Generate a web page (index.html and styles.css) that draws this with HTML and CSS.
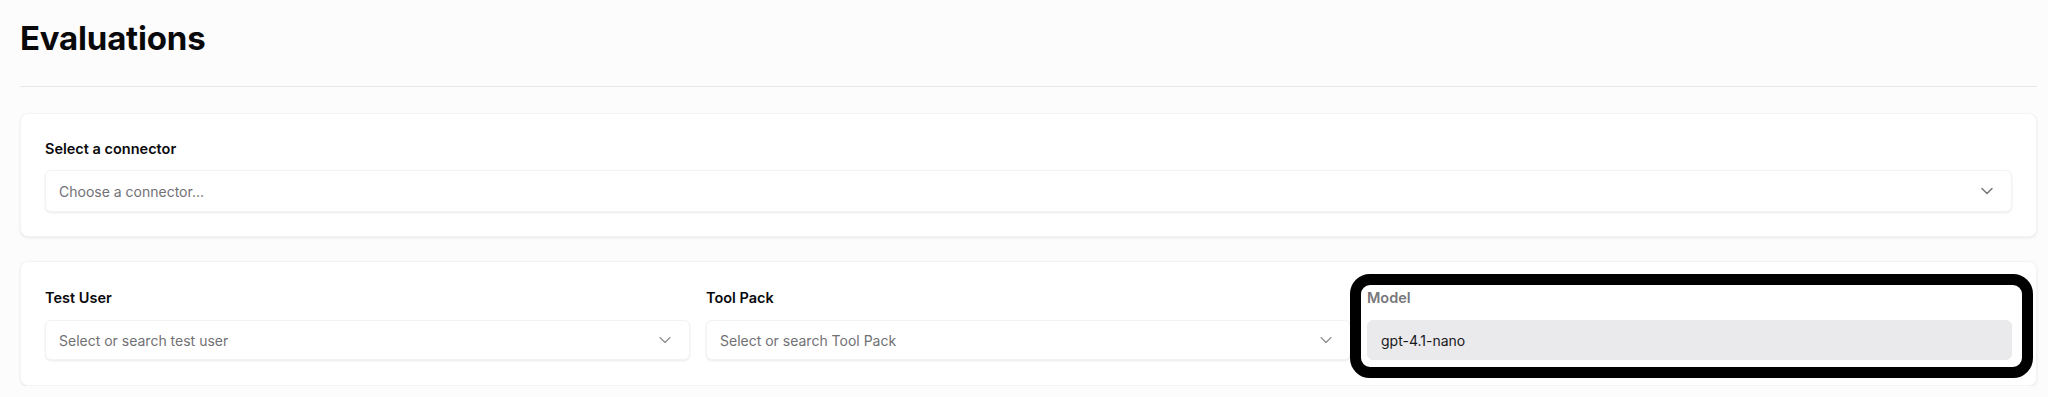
FILE: index.html
```html
<!DOCTYPE html>
<html lang="en">
<head>
<meta charset="utf-8">
<title>Evaluations</title>
<link rel="stylesheet" href="styles.css">
</head>
<body>
<main class="page">
  <h1 class="title">Evaluations</h1>
  <div class="divider"></div>

  <section class="card card-connector">
    <label class="label">Select a connector</label>
    <div class="select select-tall">
      <span class="placeholder">Choose a connector...</span>
      <svg class="chevron" viewBox="0 0 24 24" width="20" height="20"><path d="m6 9 6 6 6-6"/></svg>
    </div>
  </section>

  <section class="card card-grid">
    <div class="field">
      <label class="label">Test User</label>
      <div class="select">
        <span class="placeholder">Select or search test user</span>
        <svg class="chevron thin" viewBox="0 0 24 24" width="20" height="20"><path d="m6 9 6 6 6-6"/></svg>
      </div>
    </div>
    <div class="field">
      <label class="label">Tool Pack</label>
      <div class="select">
        <span class="placeholder">Select or search Tool Pack</span>
        <svg class="chevron thin" viewBox="0 0 24 24" width="20" height="20"><path d="m6 9 6 6 6-6"/></svg>
      </div>
    </div>
    <div class="field field-model">
      <label class="label label-disabled">Model</label>
      <div class="select select-disabled">
        <span class="value">gpt-4.1-nano</span>
      </div>
    </div>
  </section>
</main>
</body>
</html>
```
FILE: styles.css
```css
* { box-sizing: border-box; }
html, body { margin: 0; padding: 0; }
body {
  background: #fdfcfd;
  font-family: Inter, "Noto Sans", "Liberation Sans", sans-serif;
  color: #09090b;
}
.page {
  padding: 18px 11px 0 20px;
}
.title {
  margin: 0;
  font-size: 33px;
  line-height: 40px;
  font-weight: 700;
  letter-spacing: -0.2px;
}
.divider {
  margin-top: 28px;
  height: 1px;
  background: #e8e7ea;
}
.card {
  background: #ffffff;
  border: 1px solid #f4f3f6;
  border-radius: 8px;
  box-shadow: 0 1px 3px rgba(20, 10, 40, 0.06), 0 1px 2px rgba(20, 10, 40, 0.03);
}
.card-connector {
  margin-top: 26px;
  padding: 25px 24px 24px 24px;
}
.card-grid {
  margin-top: 24px;
  padding: 26px 24px 25px 24px;
  display: grid;
  grid-template-columns: 1fr 1fr 1fr;
  column-gap: 16px;
}
.label {
  display: block;
  font-size: 14.5px;
  line-height: 20px;
  font-weight: 600;
  margin-bottom: 11px;
}
.card-grid .label { margin-bottom: 12px; }
.label-disabled { color: #77767a; }
.select {
  height: 40px;
  display: flex;
  align-items: center;
  justify-content: space-between;
  padding: 0 14px 0 13px;
  background: #ffffff;
  border: 1px solid #f3f2f5;
  border-radius: 6px;
  box-shadow: 0 1px 2px rgba(20, 10, 40, 0.09);
  font-size: 14px;
}
.select-tall { height: 42px; }
.placeholder { color: #717075; }
.value { color: #18181b; }
.select-disabled {
  background: #eae9eb;
  border-color: #eae9eb;
  box-shadow: none;
}
.chevron {
  fill: none;
  stroke: #77767a;
  stroke-width: 1.8;
  stroke-linecap: round;
  stroke-linejoin: round;
  flex: none;
}
.chevron.thin { stroke-width: 1.3; stroke: #8a898e; }
.field-model { position: relative; }
.field-model::after {
  content: "";
  position: absolute;
  top: -14px;
  left: -17px;
  right: -21px;
  bottom: -18px;
  border: 11px solid #000;
  border-radius: 20px;
  pointer-events: none;
}
```
